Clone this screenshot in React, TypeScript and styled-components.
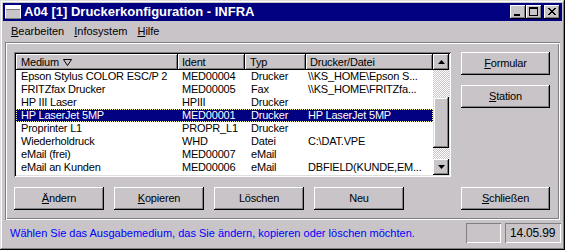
import styled, { createGlobalStyle } from "styled-components";

const FACE = "#c8c4c8";

const GlobalStyle = createGlobalStyle`
  html, body {
    margin: 0;
    padding: 0;
    background: ${FACE};
  }
  * {
    box-sizing: border-box;
  }
`;

const Window = styled.div`
  width: 565px;
  height: 250px;
  padding: 3px;
  display: flex;
  flex-direction: column;
  background: ${FACE};
  box-shadow:
    inset -1px -1px #000,
    inset 1px 1px #dfdfdf,
    inset -2px -2px #808080,
    inset 2px 2px #fff;
  font-family: "Liberation Sans", Arial, sans-serif;
  font-size: 11px;
  letter-spacing: -0.2px;
  color: #000;
`;

const TitleBar = styled.div`
  height: 18px;
  display: flex;
  align-items: center;
  gap: 3px;
  padding: 0 2px;
  background: #000080;
  color: #fff;
`;

const TitleText = styled.span`
  flex: 1;
  font-weight: 700;
  font-size: 13px;
  letter-spacing: 0;
  line-height: 18px;
  white-space: nowrap;
`;

const ControlGroup = styled.div`
  display: flex;
  align-items: center;
  gap: 2px;
`;

const ControlPair = styled.div`
  display: flex;
`;

const ControlButton = styled.div`
  width: 16px;
  height: 14px;
  display: flex;
  align-items: center;
  justify-content: center;
  background: ${FACE};
  box-shadow:
    inset -1px -1px #000,
    inset 1px 1px #fff,
    inset -2px -2px #808080;
`;

const MenuBar = styled.div`
  height: 20px;
  display: flex;
  align-items: center;
  padding-left: 3px;
  letter-spacing: 0;
`;

const MenuItem = styled.span`
  padding: 0 5px;
  line-height: 16px;
`;

const Panel = styled.div`
  margin: 1px 2px 0;
  height: 178px;
  display: flex;
  gap: 10px;
  padding: 10px 10px 10px 9px;
  box-shadow:
    inset 1px 1px #808080,
    inset 2px 2px #fff,
    inset -1px -1px #fff,
    inset -2px -2px #808080;
`;

const LeftColumn = styled.div`
  width: 437px;
  display: flex;
  flex-direction: column;
  gap: 10px;
`;

const ListView = styled.div`
  height: 125px;
  padding: 2px;
  display: flex;
  background: #fff;
  box-shadow:
    inset 1px 1px #808080,
    inset -1px -1px #fff,
    inset 2px 2px #000,
    inset -2px -2px #dfdfdf;
`;

const ListBody = styled.div`
  width: 417px;
  display: flex;
  flex-direction: column;
`;

const HeaderRow = styled.div`
  display: flex;
  height: 16px;
`;

const HeaderCell = styled.div<{ $w: number; $pad: number }>`
  width: ${(p) => p.$w}px;
  padding-left: ${(p) => p.$pad}px;
  display: flex;
  align-items: center;
  gap: 4px;
  line-height: 16px;
  background: ${FACE};
  box-shadow:
    inset -1px -1px #000,
    inset 1px 1px #fff,
    inset -2px -2px #808080;
`;

const Row = styled.div<{ $selected?: boolean }>`
  display: flex;
  height: 13px;
  line-height: 13px;
  white-space: nowrap;
  background: ${(p) => (p.$selected ? "#000080" : "#fff")};
  color: ${(p) => (p.$selected ? "#fff" : "#000")};
  outline: ${(p) => (p.$selected ? "1px dotted #ffff9a" : "none")};
  outline-offset: -1px;
`;

const Cell = styled.div<{ $w: number; $pad: number }>`
  width: ${(p) => p.$w}px;
  padding-left: ${(p) => p.$pad}px;
  overflow: hidden;
`;

const ScrollBar = styled.div`
  width: 16px;
  display: flex;
  flex-direction: column;
`;

const ScrollTrack = styled.div`
  flex: 1;
  display: flex;
  flex-direction: column;
  padding-top: 27px;
  background: repeating-conic-gradient(#fff 0% 25%, ${FACE} 0% 50%) 0 0 / 2px
    2px;
`;

const ScrollThumb = styled.div`
  height: 51px;
  background: ${FACE};
  box-shadow:
    inset -1px -1px #000,
    inset 1px 1px #dfdfdf,
    inset -2px -2px #808080,
    inset 2px 2px #fff;
`;

const ArrowButton = styled(ControlButton)`
  width: 16px;
  height: 16px;
`;

const ButtonRow = styled.div`
  display: flex;
  gap: 10px;
`;

const Button = styled.div`
  width: 90px;
  height: 23px;
  display: flex;
  align-items: center;
  justify-content: center;
  background: ${FACE};
  box-shadow:
    inset -1px -1px #000,
    inset 1px 1px #fff,
    inset -2px -2px #808080;
  padding-bottom: 1px;
`;

const RightColumn = styled.div`
  width: 89px;
  display: flex;
  flex-direction: column;
  gap: 10px;

  & > ${Button} {
    width: 89px;
  }
`;

const Spacer = styled.div`
  flex: 1;
`;

const StatusBar = styled.div`
  height: 27px;
  display: flex;
  align-items: flex-start;
  gap: 4px;
  padding: 3px 1px 0 7px;
`;

const StatusText = styled.div`
  flex: 1;
  color: #0000ff;
  line-height: 20px;
  letter-spacing: 0;
  white-space: nowrap;
`;

const StatusBox = styled.div<{ $w: number }>`
  width: ${(p) => p.$w}px;
  height: 20px;
  padding-left: 5px;
  line-height: 20px;
  box-shadow:
    inset 1px 1px #808080,
    inset -1px -1px #fff;
  font-size: 12px;
`;

const columns = [
  { label: "Medium", w: 162, hp: 5, rp: 5 },
  { label: "Ident", w: 67, hp: 4, rp: 4 },
  { label: "Typ", w: 61, hp: 5, rp: 6 },
  { label: "Drucker/Datei", w: 127, hp: 4, rp: 2 },
];

const rows = [
  ["Epson Stylus COLOR ESC/P 2", "MED00004", "Drucker", "\\\\KS_HOME\\Epson S..."],
  ["FRITZfax Drucker", "MED00005", "Fax", "\\\\KS_HOME\\FRITZfa..."],
  ["HP III Laser", "HPIII", "Drucker", ""],
  ["HP LaserJet 5MP", "MED00001", "Drucker", "HP LaserJet 5MP"],
  ["Proprinter L1", "PROPR_L1", "Drucker", ""],
  ["Wiederholdruck", "WHD", "Datei", "C:\\DAT.VPE"],
  ["eMail (frei)", "MED00007", "eMail", ""],
  ["eMail an Kunden", "MED00006", "eMail", "DBFIELD(KUNDE,EM..."],
];

function Arrow({ down }: { down?: boolean }) {
  return (
    <svg width="7" height="4" viewBox="0 0 7 4">
      <path d={down ? "M0 0H7L3.5 4Z" : "M3.5 0L7 4H0Z"} fill="#000" />
    </svg>
  );
}

export default function App() {
  return (
    <>
      <GlobalStyle />
      <Window>
        <TitleBar>
          <svg width="16" height="14" viewBox="0 0 16 14">
            <rect x="0.5" y="0.5" width="15" height="13" fill={FACE} stroke="#fff" />
            <rect x="1" y="1" width="14" height="3" fill="#fff" />
            <line x1="1" y1="4.5" x2="15" y2="4.5" stroke="#808080" />
            <line x1="0" y1="13.5" x2="16" y2="13.5" stroke="#808080" />
          </svg>
          <TitleText>A04 [1] Druckerkonfiguration - INFRA</TitleText>
          <ControlGroup>
            <ControlPair>
              <ControlButton>
                <svg width="16" height="14" viewBox="0 0 16 14">
                  <rect x="4" y="9" width="6" height="2" fill="#000" />
                </svg>
              </ControlButton>
              <ControlButton>
                <svg width="16" height="14" viewBox="0 0 16 14">
                  <rect x="3.5" y="2.5" width="8" height="8" fill="none" stroke="#000" />
                  <rect x="3" y="2" width="9" height="2" fill="#000" />
                </svg>
              </ControlButton>
            </ControlPair>
            <ControlButton>
              <svg width="16" height="14" viewBox="0 0 16 14">
                <path d="M4 3L11 10M5 3L12 10M11 3L4 10M12 3L5 10" stroke="#000" strokeWidth="1" />
              </svg>
            </ControlButton>
          </ControlGroup>
        </TitleBar>

        <MenuBar>
          <MenuItem>
            <u>B</u>earbeiten
          </MenuItem>
          <MenuItem>
            <u>I</u>nfosystem
          </MenuItem>
          <MenuItem>
            <u>H</u>ilfe
          </MenuItem>
        </MenuBar>

        <Panel>
          <LeftColumn>
            <ListView>
              <ListBody>
                <HeaderRow>
                  {columns.map((c, i) => (
                    <HeaderCell key={c.label} $w={c.w} $pad={c.hp}>
                      {c.label}
                      {i === 0 && (
                        <svg width="9" height="7" viewBox="0 0 9 7">
                          <path d="M0.5 0.5H8.5L4.5 6.5Z" fill="none" stroke="#000" />
                        </svg>
                      )}
                    </HeaderCell>
                  ))}
                </HeaderRow>
                {rows.map((r, ri) => (
                  <Row key={r[0]} $selected={ri === 3}>
                    {r.map((v, ci) => (
                      <Cell key={ci} $w={columns[ci].w} $pad={columns[ci].rp}>
                        {v}
                      </Cell>
                    ))}
                  </Row>
                ))}
              </ListBody>
              <ScrollBar>
                <ArrowButton>
                  <Arrow />
                </ArrowButton>
                <ScrollTrack>
                  <ScrollThumb />
                </ScrollTrack>
                <ArrowButton>
                  <Arrow down />
                </ArrowButton>
              </ScrollBar>
            </ListView>
            <ButtonRow>
              <Button>
                <span>
                  <u>Ä</u>ndern
                </span>
              </Button>
              <Button>
                <span>
                  <u>K</u>opieren
                </span>
              </Button>
              <Button>Löschen</Button>
              <Button>Neu</Button>
            </ButtonRow>
          </LeftColumn>
          <RightColumn>
            <Button>
              <span>
                <u>F</u>ormular
              </span>
            </Button>
            <Button>
              <span>
                <u>S</u>tation
              </span>
            </Button>
            <Spacer />
            <Button>
              <span>
                <u>S</u>chließen
              </span>
            </Button>
          </RightColumn>
        </Panel>

        <StatusBar>
          <StatusText>
            Wählen Sie das Ausgabemedium, das Sie ändern, kopieren oder löschen möchten.
          </StatusText>
          <StatusBox $w={35} />
          <StatusBox $w={56}>14.05.99</StatusBox>
        </StatusBar>
      </Window>
    </>
  );
}
